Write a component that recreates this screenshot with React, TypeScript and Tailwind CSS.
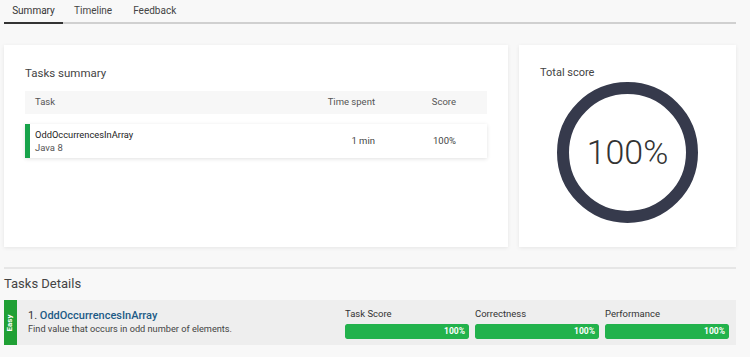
const font = { fontFamily: 'Roboto, "Liberation Sans", sans-serif' };

function ScoreBar({ label, value }: { label: string; value: number }) {
  return (
    <div className="w-[124px]">
      <div className="text-[9.5px] leading-[12px] text-[#333] mb-[4px]">{label}</div>
      <div className="h-[15px] rounded-[2px] bg-[#e3e3e3] overflow-hidden">
        <div
          className="h-full bg-[#22b24c] rounded-[2px] flex items-center justify-end pr-[4px] text-[8.5px] font-bold text-white"
          style={{ width: `${value}%` }}
        >
          {value}%
        </div>
      </div>
    </div>
  );
}

export default function App() {
  return (
    <div className="w-[750px] h-[357px] overflow-hidden bg-[#f8f8f8] px-[4px]" style={font}>
      {/* tabs */}
      <div className="w-[732px] flex border-b-2 border-[#d0d0d0] h-[24px]">
        <div className="w-[59px] h-[24px] -mb-[2px] border-b-2 border-[#333] text-center text-[10px] leading-[22px] text-[#333]">
          Summary
        </div>
        <div className="ml-[11px] text-[10px] leading-[22px] text-[#444]">Timeline</div>
        <div className="ml-[21px] text-[10px] leading-[22px] text-[#444]">Feedback</div>
      </div>

      <div className="flex gap-[11px] mt-[21px] h-[202px]">
        {/* tasks summary */}
        <div className="w-[504px] bg-white shadow-[0_1px_4px_rgba(0,0,0,0.08)] pt-[21px] px-[21px]">
          <div className="text-[11.5px] leading-[14px] text-[#444]">Tasks summary</div>
          <div className="mt-[11px] h-[23px] bg-[#f7f7f7] flex items-center text-[9.5px] text-[#555]">
            <div className="flex-1 pl-[10px]">Task</div>
            <div className="w-[70px] text-right">Time spent</div>
            <div className="w-[112px] text-right pr-[31px]">Score</div>
          </div>
          <div className="mt-[10px] h-[34px] bg-white shadow-[0_1px_4px_rgba(0,0,0,0.12)] flex items-center">
            <div className="w-[5px] h-full bg-[#17a34a]" />
            <div className="flex-1 pl-[5px]">
              <div className="text-[9.3px] leading-[13px] text-[#222]">OddOccurrencesInArray</div>
              <div className="text-[9.5px] leading-[13px] text-[#555]">Java 8</div>
            </div>
            <div className="w-[70px] text-right text-[9.5px] text-[#444]">1 min</div>
            <div className="w-[112px] text-right pr-[31px] text-[9.5px] text-[#444]">100%</div>
          </div>
        </div>

        {/* total score */}
        <div className="w-[217px] bg-white shadow-[0_1px_4px_rgba(0,0,0,0.08)] pt-[21px] px-[21px]">
          <div className="text-[11px] leading-[14px] text-[#444]">Total score</div>
          <div className="relative w-[141px] h-[141px] ml-[17px] mt-[2px]">
            <svg width="141" height="141" viewBox="0 0 141 141">
              <circle cx="70.5" cy="70.5" r="64.5" fill="none" stroke="#363a4c" strokeWidth="12" />
            </svg>
            <div className="absolute inset-0 flex items-center justify-center text-[34px] font-light text-[#333]">
              100%
            </div>
          </div>
        </div>
      </div>

      {/* tasks details */}
      <div className="mt-[20px] w-[732px] border-t-2 border-[#e6e6e6]" />
      <div className="mt-[7px] text-[13px] leading-[16px] text-[#444]">Tasks Details</div>
      <div className="mt-[8px] w-[732px] h-[45px] bg-[#eeeeee] flex">
        <div className="w-[13px] h-full bg-[#20a035] flex items-center justify-center">
          <span className="-rotate-90 text-[8px] font-bold text-white">Easy</span>
        </div>
        <div className="flex-1 pl-[11px] pt-[9px]">
          <div className="text-[11px] leading-[14px]">
            <span className="text-[#333]">1. </span>
            <span className="text-[#1d5b86] font-medium">OddOccurrencesInArray</span>
          </div>
          <div className="text-[9.2px] leading-[12px] text-[#444]">Find value that occurs in odd number of elements.</div>
        </div>
        <div className="flex gap-[6px] pt-[8px] pr-[7px]">
          <ScoreBar label="Task Score" value={100} />
          <ScoreBar label="Correctness" value={100} />
          <ScoreBar label="Performance" value={100} />
        </div>
      </div>
    </div>
  );
}
